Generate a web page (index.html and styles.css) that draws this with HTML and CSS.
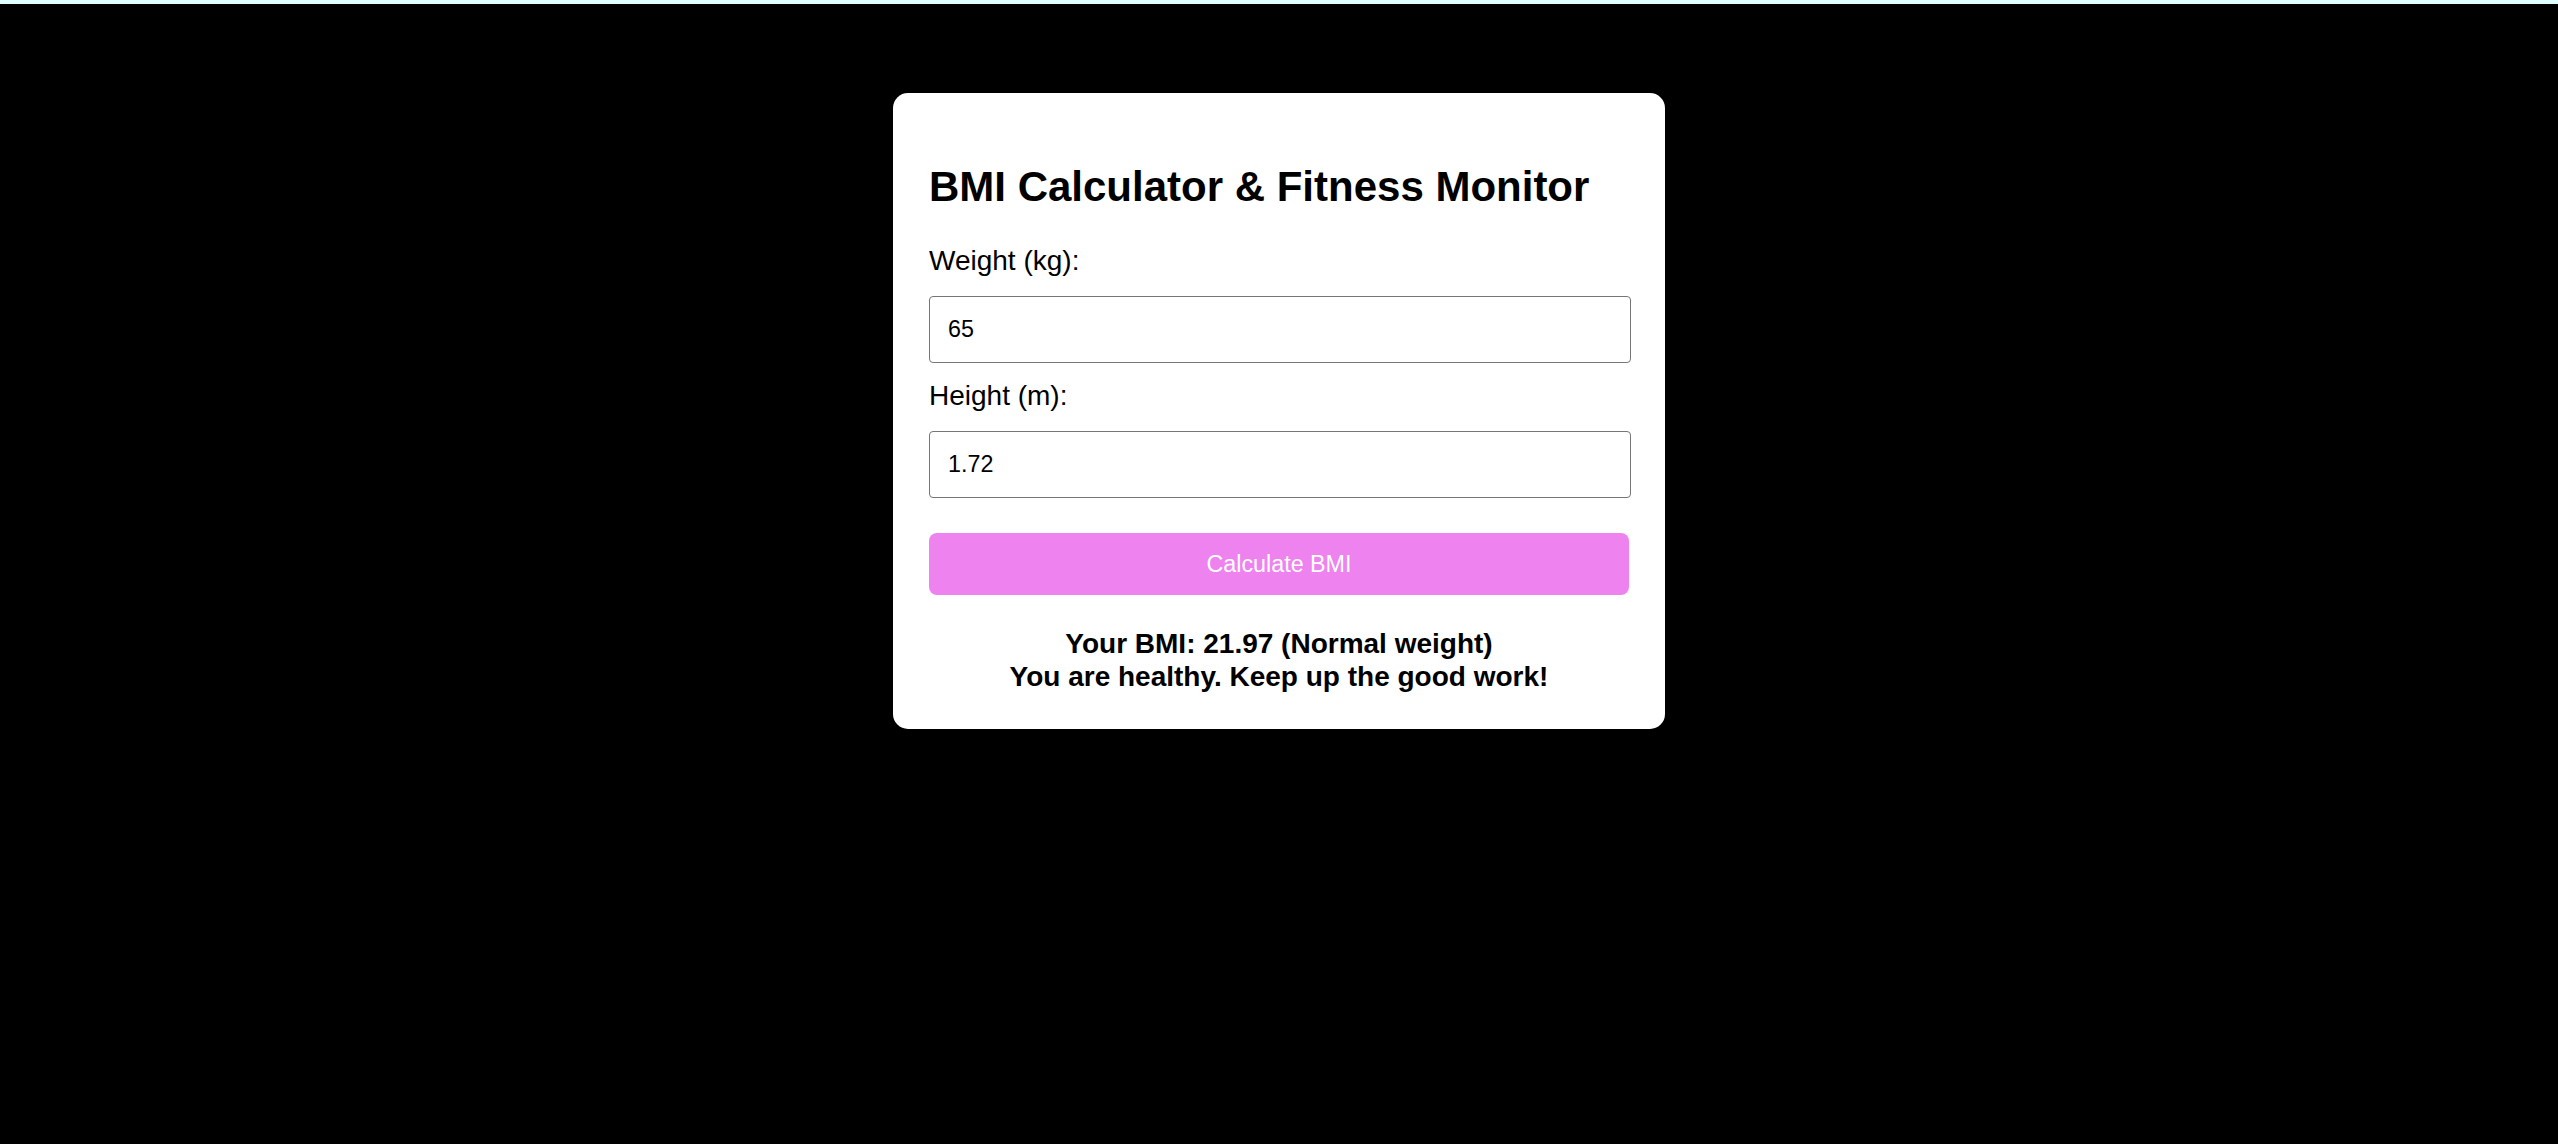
FILE: index.html
```html
<!DOCTYPE html>
<html lang="en">
<head>
<meta charset="utf-8">
<title>BMI Calculator &amp; Fitness Monitor</title>
<link rel="stylesheet" href="styles.css">
</head>
<body>
<div class="page">
  <div class="card">
    <h2 class="title">BMI Calculator &amp; Fitness Monitor</h2>
    <label class="field-label" for="weight">Weight (kg):</label>
    <input class="field-input" id="weight" type="text" value="65">
    <label class="field-label" for="height">Height (m):</label>
    <input class="field-input" id="height" type="text" value="1.72">
    <button class="calc-btn" type="button">Calculate BMI</button>
    <div class="result">Your BMI: 21.97 (Normal weight)<br>You are healthy. Keep up the good work!</div>
  </div>
</div>
</body>
</html>
```
FILE: styles.css
```css
html, body {
  margin: 0;
  padding: 0;
}
body {
  background: #e0ffff;
  padding-top: 4px;
  font-family: "Liberation Sans", Arial, sans-serif;
  color: #000;
}
.page {
  background: #000;
  min-height: 1140px;
  padding-top: 89px;
  box-sizing: border-box;
  display: flex;
  justify-content: center;
  align-items: flex-start;
}
.card {
  width: 700px;
  background: #fff;
  border-radius: 15px;
  padding: 35px 36px 36px 36px;
  display: flex;
  flex-direction: column;
}
.title {
  font-size: 42px;
  line-height: 48px;
  font-weight: bold;
  margin: 35px 0 34px 0;
}
.field-label {
  display: block;
  font-size: 28px;
  line-height: 32.2px;
  margin-bottom: 18.8px;
}
.field-input {
  display: block;
  box-sizing: border-box;
  width: 702px;
  height: 67px;
  margin: 0 0 16.5px 0;
  padding: 0 18px;
  border: 1px solid #767676;
  border-radius: 4px;
  font-family: "Liberation Sans", Arial, sans-serif;
  font-size: 23.3px;
  color: #000;
  background: #fff;
  outline: none;
}
.calc-btn {
  margin-top: 19px;
  width: 700px;
  height: 62px;
  border: none;
  border-radius: 8px;
  background: #ee82ee;
  color: #fff;
  font-family: "Liberation Sans", Arial, sans-serif;
  font-size: 23.3px;
  padding: 0;
}
.result {
  margin-top: 33.3px;
  text-align: center;
  font-weight: bold;
  font-size: 28px;
  line-height: 32.3px;
}
```
